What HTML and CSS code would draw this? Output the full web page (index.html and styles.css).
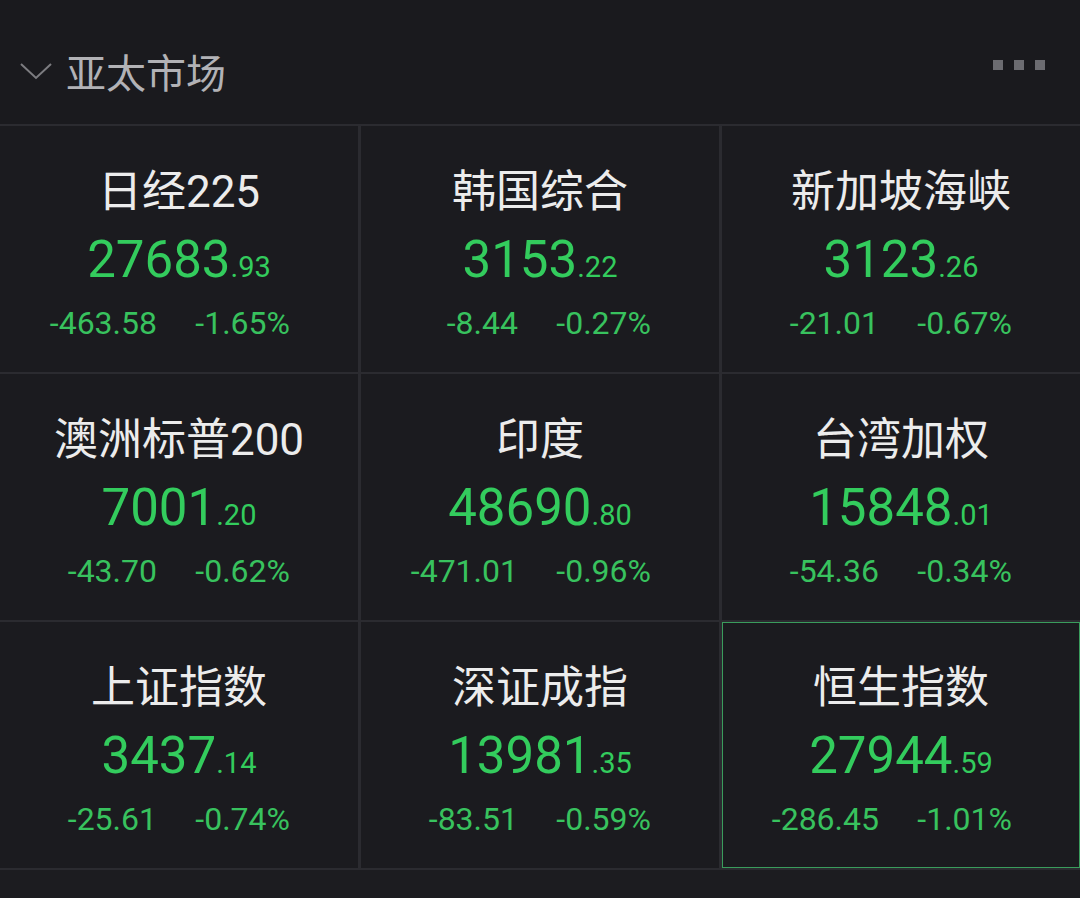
FILE: index.html
```html
<!DOCTYPE html>
<html lang="zh-CN">
<head>
<meta charset="utf-8">
<title>亚太市场</title>
<link rel="stylesheet" href="styles.css">
</head>
<body>
<div class="page">
  <header class="header">
    <svg class="chevron" width="32" height="18" viewBox="0 0 32 18"><polyline points="1,2 16,16 31,2" fill="none" stroke="#7c7c80" stroke-width="2"/></svg>
    <span class="title">亚太市场</span>
    <div class="more"><i></i><i></i><i></i></div>
  </header>
  <div class="grid">
    <div class="cell">
      <div class="name">日经225</div>
      <div class="price">27683<small>.93</small></div>
      <div class="change"><span>-463.58</span><span>-1.65%</span></div>
    </div>
    <div class="cell">
      <div class="name">韩国综合</div>
      <div class="price">3153<small>.22</small></div>
      <div class="change"><span>-8.44</span><span>-0.27%</span></div>
    </div>
    <div class="cell">
      <div class="name">新加坡海峡</div>
      <div class="price">3123<small>.26</small></div>
      <div class="change"><span>-21.01</span><span>-0.67%</span></div>
    </div>
    <div class="cell">
      <div class="name">澳洲标普200</div>
      <div class="price">7001<small>.20</small></div>
      <div class="change"><span>-43.70</span><span>-0.62%</span></div>
    </div>
    <div class="cell">
      <div class="name">印度</div>
      <div class="price">48690<small>.80</small></div>
      <div class="change"><span>-471.01</span><span>-0.96%</span></div>
    </div>
    <div class="cell">
      <div class="name">台湾加权</div>
      <div class="price">15848<small>.01</small></div>
      <div class="change"><span>-54.36</span><span>-0.34%</span></div>
    </div>
    <div class="cell">
      <div class="name">上证指数</div>
      <div class="price">3437<small>.14</small></div>
      <div class="change"><span>-25.61</span><span>-0.74%</span></div>
    </div>
    <div class="cell">
      <div class="name">深证成指</div>
      <div class="price">13981<small>.35</small></div>
      <div class="change"><span>-83.51</span><span>-0.59%</span></div>
    </div>
    <div class="cell active">
      <div class="name">恒生指数</div>
      <div class="price">27944<small>.59</small></div>
      <div class="change"><span>-286.45</span><span>-1.01%</span></div>
    </div>
  </div>
  <div class="footer"></div>
</div>
</body>
</html>
```
FILE: styles.css
```css
html, body {
  margin: 0;
  padding: 0;
  background: #1a1a1e;
}
.page {
  width: 1080px;
  height: 898px;
  overflow: hidden;
  background: #1a1a1e;
  font-family: Roboto, "Noto Sans CJK SC", sans-serif;
}
.header {
  height: 124px;
  box-sizing: border-box;
  padding: 18px 35px 0 20px;
  display: flex;
  align-items: center;
}
.chevron {
  display: block;
}
.title {
  margin-left: 14px;
  font-size: 40px;
  color: #b2b2b6;
  font-family: "Noto Sans CJK SC", sans-serif;
  line-height: 1;
}
.more {
  margin-left: auto;
  display: flex;
  gap: 11px;
  margin-top: -12px;
}
.more i {
  display: block;
  width: 10px;
  height: 10px;
  background: #6c6c71;
}
.grid {
  display: grid;
  grid-template-columns: repeat(3, 1fr);
  grid-template-rows: repeat(3, 246px);
  column-gap: 3px;
  row-gap: 2px;
  padding: 2px 0;
  background: #2b2b30;
}
.cell {
  background: #1b1b1f;
  display: flex;
  flex-direction: column;
  align-items: center;
  padding-top: 40px;
  box-sizing: border-box;
}
.cell.active {
  box-shadow: inset 0 0 0 1px #3a9c5c;
}
.name {
  font-size: 44px;
  line-height: 52px;
  color: #ececec;
  white-space: nowrap;
}
.price {
  margin-top: 14px;
  font-size: 51px;
  line-height: 56px;
  color: #33cc5d;
  white-space: nowrap;
}
.price small {
  font-size: 29px;
}
.change {
  margin-top: 10px;
  align-self: flex-start;
  display: grid;
  grid-template-columns: 157px 133px;
  font-size: 32px;
  line-height: 36px;
  color: #38c25e;
  text-align: right;
  white-space: nowrap;
}
.footer {
  height: 28px;
  background: #1c1c20;
}
```
